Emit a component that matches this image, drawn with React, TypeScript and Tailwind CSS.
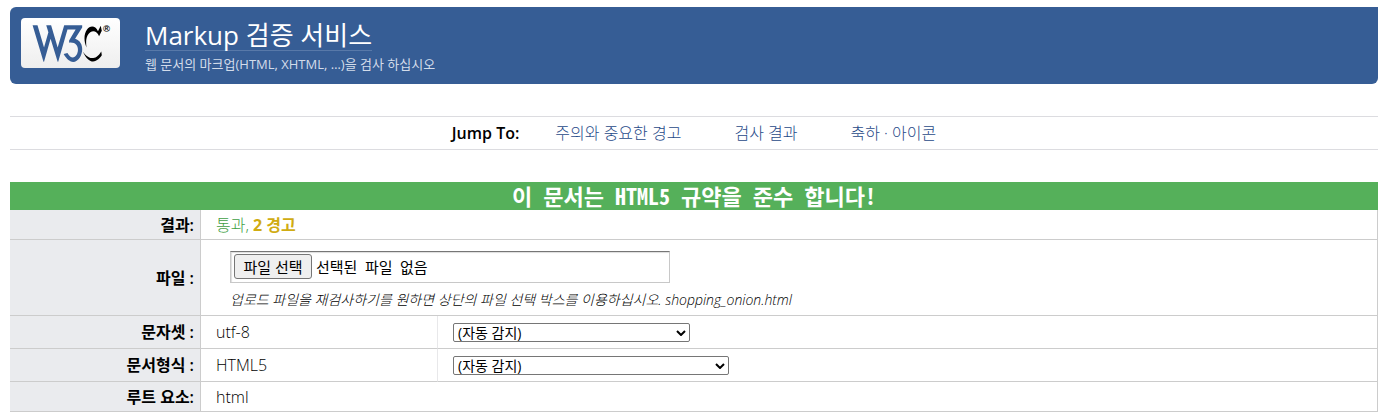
import { useRef, useState } from "react";
import type { ReactNode } from "react";

const MONO = "font-['Noto_Sans_Mono_CJK_KR','Noto_Sans_CJK_KR',monospace]";

function W3CLogo() {
  return (
    <svg viewBox="0 0 99 50" className="h-[50px] w-[99px]" role="img" aria-label="W3C">
      <g transform="translate(10.5 4.5) scale(0.545)">
        <path
          fill="#365d95"
          d="M36,5l12,41l12-41h33v4l-13,21c30,10,2,69-21,28l7-2c15,27,33-22,3-19v-4l12-20h-15l-17,59h-1l-13-42l-12,42h-1l-20-67h9l12,41l8-28l-4-13h9"
        />
        <path d="M94,53c15,32,30,14,35,7l-1-7c-16,26-32,3-34,0M122,16c-10-21-34,0-21,30c-5-30,16-38,23-21l5-10l-2-9" />
      </g>
      <text x="82" y="14" fontSize="9.5" fontWeight="bold" fontFamily="Liberation Sans, sans-serif">
        ®
      </text>
    </svg>
  );
}

function Row({ label, htmlFor, height, children }: { label: string; htmlFor?: string; height: string; children: ReactNode }) {
  return (
    <tr className={height}>
      <th scope="row" className="border-r border-b border-[#cccccc] bg-[#eaebee] pr-1.5 text-right font-semibold">
        {htmlFor ? <label htmlFor={htmlFor}>{label}</label> : label}
      </th>
      {children}
    </tr>
  );
}

function Detect({ id, width }: { id: string; width: string }) {
  return (
    <td className="border-r border-b border-[#cccccc] pl-[15px]">
      <div className={`relative ${width}`}>
        <select
          id={id}
          className="block h-[19px] w-full appearance-none rounded-xs border border-[#767676] bg-white pl-1 text-sm leading-[17px] font-normal text-black"
        >
          <option>(자동 감지)</option>
        </select>
        <svg
          viewBox="0 0 10 6"
          className="pointer-events-none absolute top-[7px] right-1 h-1.5 w-2.5"
          fill="none"
          stroke="black"
          strokeWidth="2"
          aria-hidden="true"
        >
          <path d="M1 1l4 4 4-4" />
        </svg>
      </div>
    </td>
  );
}

export default function App() {
  const fileRef = useRef<HTMLInputElement>(null);
  const [fileName, setFileName] = useState("");

  return (
    <div className="bg-white pt-[7px] pr-3 pb-2 pl-2.5 font-['Open_Sans','Noto_Sans_CJK_KR',sans-serif] text-base leading-5 font-light text-black">
      <header className="flex rounded-md rounded-tr-none bg-[#365d95] px-[11px] pt-[11px] pb-3">
        <a href="#home" className="block h-[50px] shrink-0 rounded-[4px] bg-linear-to-b from-white to-[#eeeeee]">
          <W3CLogo />
        </a>
        <div className="ml-[25px]">
          <h1 className="flex text-[26px] leading-[30px] font-normal text-white">
            <a href="#validator" className="border-b border-[#5879a9] pt-0.5">
              Markup 검증 서비스
            </a>
          </h1>
          <p className="mt-[5px] text-[13px] leading-4 font-normal text-[#d3dcea]">웹 문서의 마크업(HTML, XHTML, …)을 검사 하십시오</p>
        </div>
      </header>

      <nav className="mt-8 flex h-[34px] items-center justify-center border-y border-[#dcdce0] text-[#1f4a88]">
        <strong className="mr-9 font-semibold text-black">Jump To:</strong>
        <ul className="flex gap-[53px]">
          <li><a href="#warnings">주의와 중요한 경고</a></li>
          <li><a href="#result">검사 결과</a></li>
          <li><a href="#icons">축하 · 아이콘</a></li>
        </ul>
      </nav>

      <table className="mt-8 w-full table-fixed border-separate border-spacing-0">
        <colgroup>
          <col className="w-[191px]" />
          <col className="w-[237px]" />
          <col />
        </colgroup>
        <thead>
          <tr>
            <th colSpan={3} className={`bg-[#55b05a] pb-0.5 text-center text-[22px] leading-[26px] font-bold text-white ${MONO}`}>
              이 문서는 HTML5 규약을 준수 합니다!
            </th>
          </tr>
        </thead>
        <tbody>
          <Row label="결과:" height="h-[30px]">
            <td colSpan={2} className="border-r border-b border-[#cccccc] pl-[15px] text-[#3fa045]">
              통과, <span className="font-bold text-[#d0ac12]">2 경고</span>
            </td>
          </Row>
          <Row label="파일 :" htmlFor="uploaded-file" height="h-[76px]">
            <td colSpan={2} className="border-r border-b border-[#cccccc] pt-1 pl-[29px]">
              <div className="flex h-8 w-[440px] items-center border border-[#c8c8c8] border-t-[#767676] pl-[3px] shadow-[inset_1px_1px_1px_#dddddd]">
                <button
                  type="button"
                  onClick={() => fileRef.current?.click()}
                  className="h-[25px] w-[78px] rounded-[3px] border border-[#767676] bg-[#efefef] text-[15px] leading-5 font-normal whitespace-nowrap text-black"
                >
                  파일 선택
                </button>
                <input
                  ref={fileRef}
                  id="uploaded-file"
                  type="file"
                  className="hidden"
                  onChange={(e) => setFileName(e.target.files?.[0]?.name ?? "")}
                />
                <span className={`ml-1 text-[15px] leading-5 font-normal ${MONO}`}>{fileName || "선택된 파일 없음"}</span>
              </div>
              <p className="mt-2 text-sm leading-[18px] italic">
                업로드 파일을 재검사하기를 원하면 상단의 파일 선택 박스를 이용하십시오. shopping_onion.html
              </p>
            </td>
          </Row>
          <Row label="문자셋 :" htmlFor="charset" height="h-[33px]">
            <td className="border-r border-b border-r-[#e8e8ea] border-b-[#cccccc] pl-[15px]">utf-8</td>
            <Detect id="charset" width="w-[237px]" />
          </Row>
          <Row label="문서형식 :" htmlFor="doctype" height="h-[33px]">
            <td className="border-r border-b border-r-[#e8e8ea] border-b-[#cccccc] pl-[15px]">HTML5</td>
            <Detect id="doctype" width="w-[276px]" />
          </Row>
          <Row label="루트 요소:" height="h-[30px]">
            <td colSpan={2} className="border-r border-b border-[#cccccc] pl-[15px]">html</td>
          </Row>
        </tbody>
      </table>
    </div>
  );
}
